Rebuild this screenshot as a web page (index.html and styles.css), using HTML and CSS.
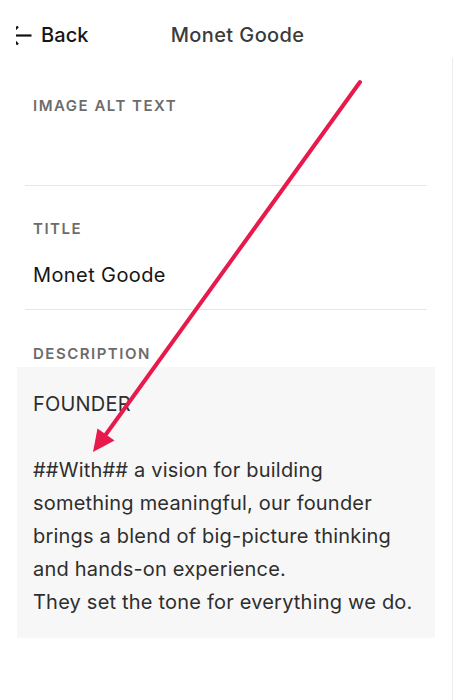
FILE: index.html
```html
<!DOCTYPE html>
<html>
<head>
<meta charset="utf-8">
<link rel="stylesheet" href="styles.css">
</head>
<body>
<div class="page">
  <header class="topbar">
    <a class="back">
      <svg class="back-icon" width="16" height="24" viewBox="16 22 16 24">
        <path d="M9 34.5 L18 25.5 M9 34.5 L18 43.5" stroke="#111" stroke-width="2.4" fill="none"/>
        <path d="M12 34.5 H31.5" stroke="#111" stroke-width="2.2" fill="none"/>
      </svg>
      <span class="back-label">Back</span>
    </a>
    <h1 class="page-title">Monet Goode</h1>
  </header>
  <main class="panel">
    <section class="field">
      <div class="field-label">IMAGE ALT TEXT</div>
      <div class="field-value empty"></div>
    </section>
    <section class="field">
      <div class="field-label">TITLE</div>
      <div class="field-value">Monet Goode</div>
    </section>
    <section class="field last">
      <div class="field-label">DESCRIPTION</div>
      <div class="textbox">
        <p class="tb-line">FOUNDER</p>
        <p class="tb-line">&nbsp;</p>
        <p class="tb-line">##With## a vision for building</p>
        <p class="tb-line">something meaningful, our founder</p>
        <p class="tb-line">brings a blend of big-picture thinking</p>
        <p class="tb-line">and hands-on experience.</p>
        <p class="tb-line">They set the tone for everything we do.</p>
      </div>
    </section>
  </main>
  <svg class="annotation" width="456" height="700" viewBox="0 0 456 700">
    <line x1="360" y1="82" x2="104" y2="437" stroke="#e8194b" stroke-width="4" stroke-linecap="round"/>
    <polygon points="93,452 97.5,428.5 114.5,440.5" fill="#e8194b"/>
  </svg>
</div>
</body>
</html>
```

FILE: styles.css
```css
* { box-sizing: border-box; }
html, body { margin: 0; padding: 0; background: #fff; }
body {
  font-family: Inter, "Open Sans", Arial, sans-serif;
  color: #2b2b2b;
  width: 456px;
  height: 700px;
  overflow: hidden;
}
.page {
  position: relative;
  width: 456px;
  height: 700px;
}
.topbar {
  display: flex;
  align-items: center;
  height: 58px;
  padding: 23px 0 11px 16px;
}
.back {
  display: flex;
  align-items: center;
  color: #161616;
  text-decoration: none;
}
.back-icon { display: block; }
.back-label {
  margin-left: 9px;
  font-size: 20px;
  line-height: 24px;
  font-weight: 500;
  letter-spacing: 0.1px;
}
.page-title {
  margin: 0 0 0 82px;
  font-size: 20px;
  line-height: 24px;
  font-weight: 500;
  letter-spacing: 0.4px;
  color: #3b3b3b;
}
.panel {
  width: 453px;
  height: 642px;
  border-right: 1px solid #ececec;
  padding: 0 25px;
}
.field {
  border-bottom: 1px solid #e6e6e6;
}
.field.last { border-bottom: none; }
.field-label {
  padding-left: 8px;
  font-size: 15px;
  line-height: 18px;
  font-weight: 600;
  letter-spacing: 1.5px;
  color: #6c6c6c;
}
.panel > .field:first-child .field-label { padding-top: 39px; }
.field-value {
  padding-left: 8px;
  font-size: 20px;
  line-height: 24px;
  letter-spacing: 0.4px;
  color: #151515;
}
.field-value.empty { height: 70px; }
.field:nth-child(2) .field-label { padding-top: 34px; }
.field:nth-child(2) .field-value { padding-top: 25px; padding-bottom: 22px; }
.field.last .field-label { padding-top: 35px; padding-bottom: 4px; }
.textbox {
  margin: 0 -8px;
  background: #f7f7f7;
  padding: 21px 16px 19px;
}
.tb-line {
  margin: 0;
  font-size: 20px;
  line-height: 33px;
  letter-spacing: 0.2px;
  white-space: nowrap;
  color: #2e2e2e;
}
.annotation {
  position: absolute;
  left: 0;
  top: 0;
  pointer-events: none;
}
```
